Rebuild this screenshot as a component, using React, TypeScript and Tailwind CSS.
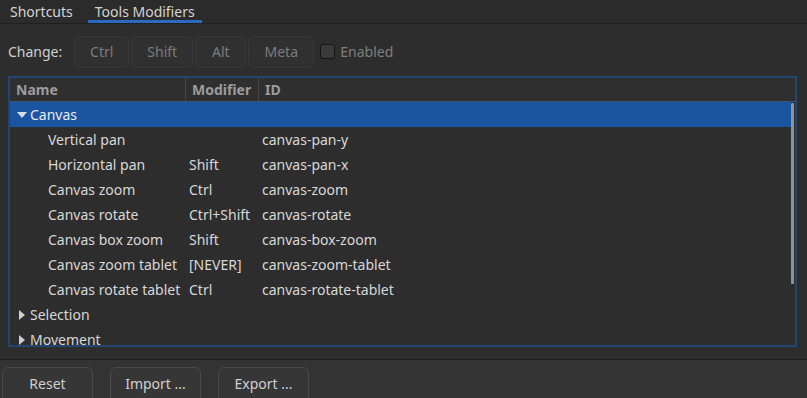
import React from "react";

const font = { fontFamily: '"Noto Sans", "Open Sans", sans-serif' };

type Row = { name: string; mod: string; id: string };
const rows: Row[] = [
  { name: "Vertical pan", mod: "", id: "canvas-pan-y" },
  { name: "Horizontal pan", mod: "Shift", id: "canvas-pan-x" },
  { name: "Canvas zoom", mod: "Ctrl", id: "canvas-zoom" },
  { name: "Canvas rotate", mod: "Ctrl+Shift", id: "canvas-rotate" },
  { name: "Canvas box zoom", mod: "Shift", id: "canvas-box-zoom" },
  { name: "Canvas zoom tablet", mod: "[NEVER]", id: "canvas-zoom-tablet" },
  { name: "Canvas rotate tablet", mod: "Ctrl", id: "canvas-rotate-tablet" },
];

function TriDown() {
  return (
    <svg width="10" height="8" viewBox="0 0 10 8">
      <path d="M0 1 L10 1 L5 7 Z" fill="#d8dde6" />
    </svg>
  );
}
function TriRight() {
  return (
    <svg width="8" height="10" viewBox="0 0 8 10">
      <path d="M1 0 L7 5 L1 10 Z" fill="#cfcfcf" />
    </svg>
  );
}

export default function App() {
  return (
    <div
      className="w-[807px] h-[398px] bg-[#2d2d2d] text-[14px] text-[#d8d8d8] overflow-hidden flex flex-col"
      style={font}
    >
      {/* tab bar */}
      <div className="h-[24px] flex items-stretch border-b border-[#202020] bg-[#2b2b2b] shrink-0">
        <div className="pl-[10px] pr-[15px] flex items-center text-[#d4d4d4]">Shortcuts</div>
        <div className="px-[7px] flex items-center text-[#d4d4d4] border-b-[3px] border-[#2a6bc0] pt-[3px]">
          Tools Modifiers
        </div>
      </div>

      {/* change row */}
      <div className="h-[52px] flex items-center pl-[8px] pt-[7px] pb-[4px] shrink-0">
        <span className="text-[#d0d0d0] mr-[12px]">Change:</span>
        <div className="flex gap-[2px]">
          {[
            ["Ctrl", "w-[55px]"],
            ["Shift", "w-[62px]"],
            ["Alt", "w-[51px]"],
            ["Meta", "w-[66px]"],
          ].map(([t, w]) => (
            <div
              key={t}
              className={`${w} h-[32px] rounded-[5px] border border-[#383838] bg-[#303030] flex items-center justify-center text-[#7c7c7c]`}
            >
              {t}
            </div>
          ))}
        </div>
        <div className="ml-[6px] w-[15px] h-[15px] rounded-[3px] border border-[#141414] bg-[#3a3a3a]" />
        <span className="ml-[5px] text-[#7e7e7e]">Enabled</span>
      </div>

      {/* tree */}
      <div className="ml-[8px] mr-[10px] h-[271px] border-2 border-[#22466f] flex flex-col overflow-hidden shrink-0">
        <div className="h-[24px] flex items-stretch bg-[#2f2f2f] border-b border-[#41556e] text-[#9c9c9c] font-bold shrink-0">
          <div className="w-[176px] pl-[6px] flex items-center border-r border-[#444]">Name</div>
          <div className="w-[73px] pl-[6px] flex items-center border-r border-[#444]">Modifier</div>
          <div className="flex-1 pl-[6px] flex items-center">ID</div>
        </div>
        <div className="flex-1 flex overflow-hidden">
          <div className="flex-1 flex flex-col">
            <div className="h-[25px] shrink-0 bg-[#1b54a1] flex items-center pl-[3px] text-[#e6ecf5]">
              <span className="w-[17px] flex items-center justify-center">
                <TriDown />
              </span>
              <span>Canvas</span>
            </div>
            {rows.map((r) => (
              <div key={r.id} className="h-[25px] shrink-0 flex items-center">
                <div className="w-[177px] pl-[38px] whitespace-nowrap">{r.name}</div>
                <div className="w-[73px] pl-[2px] whitespace-nowrap">{r.mod}</div>
                <div className="flex-1 pl-[2px] whitespace-nowrap">{r.id}</div>
              </div>
            ))}
            {["Selection", "Movement"].map((g) => (
              <div key={g} className="h-[25px] shrink-0 flex items-center pl-[3px]">
                <span className="w-[17px] flex items-center justify-center">
                  <TriRight />
                </span>
                <span>{g}</span>
              </div>
            ))}
          </div>
          <div className="w-[4px] pt-[1px]">
            <div className="h-[181px] w-[3px] bg-[#8d939b] rounded-[1px]" />
          </div>
        </div>
      </div>

      {/* footer */}
      <div className="mt-[12px] flex-1 border-t border-[#1e1e1e] bg-[#333333] pt-[7px] pl-[2px] flex gap-[17px] items-start">
        {["Reset", "Import ...", "Export ..."].map((b) => (
          <div
            key={b}
            className="w-[91px] h-[36px] rounded-[6px] border border-[#4a4a4a] bg-[#363636] flex items-center justify-center text-[#d0d0d0] pb-[4px]"
          >
            {b}
          </div>
        ))}
      </div>
    </div>
  );
}
